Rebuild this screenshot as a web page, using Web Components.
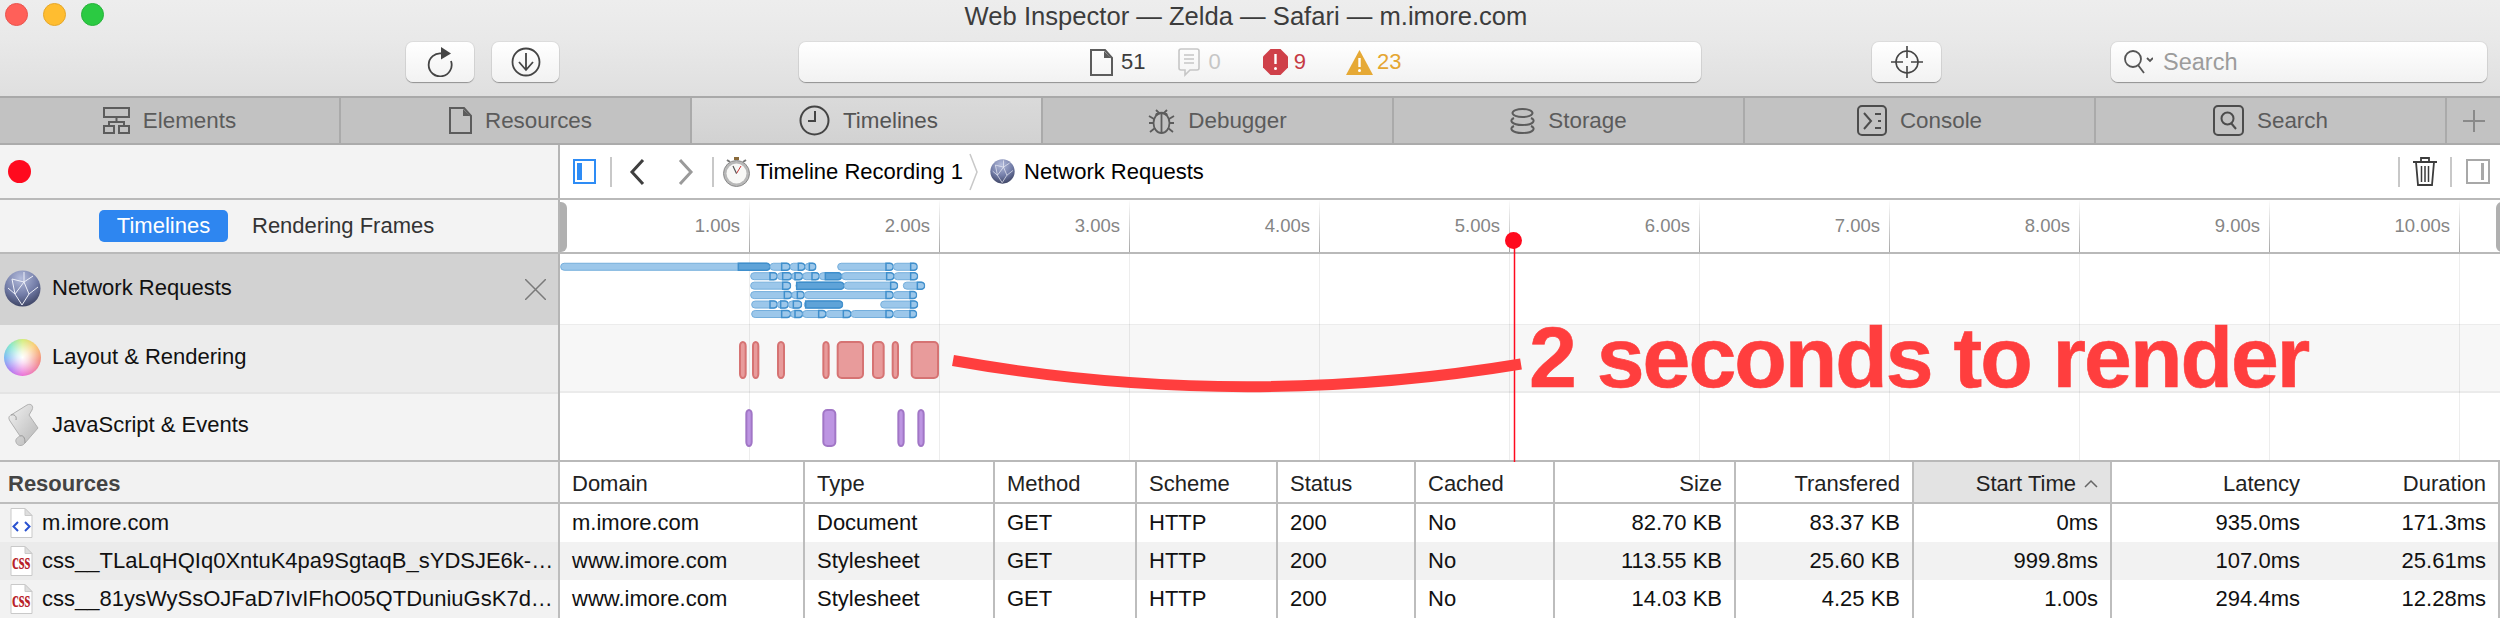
<!DOCTYPE html>
<html>
<head>
<meta charset="utf-8">
<title>Web Inspector</title>
<style>
  html, body { margin: 0; padding: 0; background: #fff; }
  body { width: 2500px; height: 618px; overflow: hidden; font-family: "Liberation Sans", Arial, sans-serif; font-size: 22px; }
</style>
</head>
<body>
<inspector-window>
  <title-bar>Web Inspector — Zelda — Safari — m.imore.com</title-bar>
  <tool-bar></tool-bar>
  <tab-bar>
    <tab-item icon="elements" style="width:341px">Elements</tab-item>
    <tab-item icon="doc" style="padding-left:10px">Resources</tab-item>
    <tab-item icon="clock" active style="padding-left:4px">Timelines</tab-item>
    <tab-item icon="bug">Debugger</tab-item>
    <tab-item icon="db">Storage</tab-item>
    <tab-item icon="console">Console</tab-item>
    <tab-item icon="search">Search</tab-item>
    <tab-plus></tab-plus>
  </tab-bar>
  <nav-row></nav-row>
  <ruler-row></ruler-row>
  <timeline-area></timeline-area>
  <resource-table></resource-table>
  <time-annotation>2 seconds to render</time-annotation>
</inspector-window>

<script>
// shared icons, sized in real pixels
const ICONS = {
  elements: `<svg width="27" height="27" viewBox="0 0 27 27" fill="none" stroke="#5c5c5c" stroke-width="2"><rect x="1" y="1" width="25" height="9"/><path d="M13.500 10v5M6 20v-5h15v5"/><rect x="1" y="19" width="10" height="7"/><rect x="16" y="19" width="10" height="7"/></svg>`,
  doc: `<svg width="23" height="27" viewBox="0 0 23 27" fill="none" stroke="#5c5c5c" stroke-width="2"><path d="M1 1h14l7 8v17H1z"/><path d="M14 2v7h7" fill="#5c5c5c" stroke="none"/></svg>`,
  clock: `<svg width="31" height="31" viewBox="0 0 31 31" fill="none" stroke="#444" stroke-width="2"><circle cx="15.500" cy="15.500" r="14"/><path d="M16 6v10H9"/></svg>`,
  bug: `<svg width="27" height="28" viewBox="0 0 27 28" fill="none" stroke="#5c5c5c" stroke-width="1.800"><ellipse cx="13.500" cy="16" rx="8" ry="10"/><path d="M8 8c1-3 10-3 11 0M13.500 7v19M8 3l3 3M19 3l-3 3M1 9l5 3M26 9l-5 3M1 16h4M26 16h-4M2 25l5-4M25 25l-5-4"/></svg>`,
  db: `<svg width="25" height="26" viewBox="0 0 25 26" fill="none" stroke="#5c5c5c" stroke-width="2"><ellipse cx="12.500" cy="5" rx="10" ry="4"/><path d="M4 10c-5 2-3 7 8.500 7s13.500-5 8.500-7"/><path d="M4 18c-5 2-3 7 8.500 7s13.500-5 8.500-7"/></svg>`,
  console: `<svg width="30" height="31" viewBox="0 0 30 31" fill="none" stroke="#4c4c4c" stroke-width="2"><rect x="1" y="1" width="28" height="29" rx="4"/><path d="M7 8l7 8-7 8M18 9h6M21 16h3M18 23h6"/></svg>`,
  search: `<svg width="31" height="31" viewBox="0 0 31 31" fill="none" stroke="#4c4c4c" stroke-width="2"><rect x="1" y="1" width="29" height="29" rx="4"/><circle cx="14.500" cy="13.500" r="6"/><path d="M18 18l5 6"/></svg>`
};

function globe(size) {
  return `<svg width="${size}" height="${size}" viewBox="0 0 37 37">
    <defs><radialGradient id="gl" cx="45%" cy="22%" r="85%"><stop offset="0" stop-color="#b4bcdc"/><stop offset=".55" stop-color="#717ba6"/><stop offset="1" stop-color="#343a58"/></radialGradient></defs>
    <circle cx="18.500" cy="18.500" r="18" fill="url(#gl)"/>
    <path d="M8 9l12 3 9-6M20 12l-9 12-7-6M20 12l5 12 9-7M11 24l7 11M25 24l-7 11M8 9l3 15M20 2v10" fill="none" stroke="#eef0f8" stroke-width="1"/>
  </svg>`;
}

function fileIcon(kind) {
  const mark = kind == "html"
    ? `<path d="M8 14l-4.500 4.500L8 23M15 14l4.500 4.500L15 23" fill="none" stroke="#2a52d0" stroke-width="2"/>`
    : `<text transform="translate(2 23) scale(1 1.600)" font-family="Liberation Serif, serif" font-weight="700" font-size="15" fill="#b8222a">css</text>`;
  return `<svg width="23" height="30" viewBox="0 0 23 30"><path d="M1 .5h14l7 7v22H1z" fill="#fff" stroke="#c9c9c9"/><path d="M15 .5v7h7z" fill="#dedede" stroke="#c9c9c9"/>${mark}</svg>`;
}

class Base extends HTMLElement {
  connectedCallback() {
    this.attachShadow({mode: "open"}).innerHTML = this.template();
  }
}

class InspectorWindow extends Base {
  template() {
    return `<style>
      :host { display: flex; flex-direction: column; position: relative; width: 2500px; height: 618px; overflow: hidden; }
    </style><slot></slot>`;
  }
}

class TitleBar extends Base {
  template() {
    return `<style>
      :host { display: block; height: 38px; background: linear-gradient(#ededed, #e9e9e9); color: #3c3c3c; font-size: 25.600px; }
      .wrap { display: flex; align-items: center; height: 32px; position: relative; }
      .lights { display: flex; gap: 15px; padding-left: 5px; width: 300px; margin-top: -3px; }
      .lights i { width: 23px; height: 23px; border-radius: 50%; box-sizing: border-box; }
      .title { position: absolute; left: 0; right: 0; text-align: center; transform: translateX(-4px); }
    </style>
    <div class="wrap">
      <div class="lights">
        <i style="background:#ff6059;border:1px solid #e9544e"></i>
        <i style="background:#ffbd30;border:1px solid #e5a72a"></i>
        <i style="background:#2bca42;border:1px solid #27b33a"></i>
      </div>
      <div class="title"><slot></slot></div>
    </div>`;
  }
}

class ToolBar extends Base {
  template() {
    return `<style>
      :host { display: block; height: 58px; padding-top: 4px; box-sizing: border-box; background: linear-gradient(#e9e9e9, #dfdfdf); }
      .b { height: 40px; box-sizing: border-box; border-radius: 7px; background: linear-gradient(#fff, #f2f2f2); box-shadow: 0 1px 1px rgba(0,0,0,.32), 0 0 0 1px rgba(0,0,0,.05); display: flex; align-items: center; justify-content: center; }
      .st { display: flex; align-items: center; font-size: 22px; gap: 8px; }
      .search { justify-content: flex-start; padding-left: 12px; color: #9c9c9c; font-size: 23.500px; gap: 10px; }
    </style>
    <div style="display:flex;padding-left:406px;height:40px">
      <div class="b" style="width:68px"><svg width="26" height="30" viewBox="0 0 26 30" fill="none"><path d="M15 6.500A11.500 11.500 0 1 0 24 14" stroke="#444" stroke-width="1.800"/><path d="M14 0l10 6.500-10 6z" fill="#444"/></svg></div>
      <div class="b" style="width:67px;margin-left:18px"><svg width="30" height="30" viewBox="0 0 30 30" fill="none" stroke="#444" stroke-width="1.800"><circle cx="15" cy="15" r="13.500"/><path d="M15 6v17M8 15l7 8 7-8"/></svg></div>
      <div class="b" style="width:902px;margin-left:240px;justify-content:flex-start;padding-left:291px">
        <div class="st" style="color:#3c3c3c">${ICONS.doc}<span>51</span></div>
        <div class="st" style="color:#c6c6c6;margin-left:33px"><svg width="22" height="29" viewBox="0 0 22 29" fill="none" stroke="#c6c6c6" stroke-width="1.600"><path d="M3 1h16q2 0 2 2v17q0 2-2 2h-7l-5 5v-5H3q-2 0-2-2V3q0-2 2-2z"/><path d="M6 7h10M6 11h10M6 15h10"/></svg><span>0</span></div>
        <div class="st" style="color:#c63b45;margin-left:42px;gap:6px"><svg width="25" height="26" viewBox="0 0 25 26"><path d="M7.500 0h10L25 7.500v11L17.500 26h-10L0 18.500v-11z" fill="#cf4049"/><path d="M12.500 5v10" stroke="#fff" stroke-width="2.400"/><circle cx="12.500" cy="19.500" r="1.500" fill="#fff"/></svg><span>9</span></div>
        <div class="st" style="color:#e5a632;margin-left:40px;gap:4px"><svg width="27" height="25" viewBox="0 0 27 25"><path d="M13.500 0L27 25H0z" fill="#e6a935"/><path d="M13.500 8v9" stroke="#fff" stroke-width="2.400"/><circle cx="13.500" cy="20.500" r="1.500" fill="#fff"/></svg><span>23</span></div>
      </div>
      <div class="b" style="width:69px;margin-left:171px"><svg width="32" height="32" viewBox="0 0 32 32" fill="none" stroke="#444" stroke-width="1.600"><circle cx="16" cy="16" r="11"/><path d="M16 0v12M16 20v12M0 16h12M20 16h12"/></svg></div>
      <div class="b search" style="width:376px;margin-left:170px"><svg width="30" height="26" viewBox="0 0 30 26" fill="none" stroke="#555" stroke-width="1.800"><circle cx="10" cy="10" r="8"/><path d="M15 16l6 8M24 9l3 3 3-3"/></svg><span>Search</span></div>
    </div>`;
  }
}

class TabBar extends Base {
  template() {
    return `<style>
      :host { display: flex; height: 49px; box-sizing: border-box; background: #c2c2c2; border-top: 2px solid #a9a9a9; border-bottom: 2px solid #ababab; }
    </style><slot></slot>`;
  }
}

class TabItem extends Base {
  template() {
    return `<style>
      :host { display: flex; align-items: center; justify-content: center; gap: 13px; width: 351px; height: 100%; box-sizing: border-box; border-right: 2px solid #aaa; color: #5b5b5b; font-size: 22.400px; flex: none; }
      :host([active]) { background: linear-gradient(#dadada, #d2d2d2); color: #545454; }
      svg { display: block; }
    </style>${ICONS[this.getAttribute("icon")]}<slot></slot>`;
  }
}

class TabPlus extends Base {
  template() {
    return `<style>:host { display: flex; flex: 1; align-items: center; justify-content: center; }</style>
    <svg width="22" height="22" viewBox="0 0 22 22" stroke="#8a8a8a" stroke-width="2"><path d="M11 0v22M0 11h22"/></svg>`;
  }
}

class NavRow extends Base {
  template() {
    return `<style>
      :host { display: flex; height: 55px; box-sizing: border-box; border-bottom: 2px solid #b9b9b9; background: #fff; color: #000; font-size: 22px; }
      .left { width: 550px; flex: none; background: #f3f3f3; border-right: 2px solid #b5b5b5; display: flex; align-items: center; padding-left: 8px; }
      .left i { width: 23px; height: 23px; border-radius: 50%; background: #ff0a1e; }
      .right { flex: 1; display: flex; align-items: center; padding-left: 13px; padding-right: 10px; }
      .sep { width: 2px; height: 30px; background: #c8c8c8; flex: none; }
      .grow { flex: 1; }
      svg { display: block; flex: none; }
    </style>
    <div class="left"><i></i></div>
    <div class="right">
      <svg width="23" height="25" viewBox="0 0 23 25" fill="none"><rect x="1" y="1" width="21" height="23" stroke="#2e8cf5" stroke-width="2"/><rect x="4" y="4" width="5" height="17" fill="#2e8cf5"/></svg>
      <div class="sep" style="margin-left:14px"></div>
      <svg style="margin-left:17px" width="16" height="28" viewBox="0 0 16 28" fill="none" stroke="#3f3f3f" stroke-width="3"><path d="M14 2L3 14l11 12"/></svg>
      <svg style="margin-left:33px" width="16" height="28" viewBox="0 0 16 28" fill="none" stroke="#9a9a9a" stroke-width="3"><path d="M2 2l11 12L2 26"/></svg>
      <div class="sep" style="margin-left:18px"></div>
      <svg style="margin-left:9px" width="27" height="30" viewBox="0 0 27 30"><rect x="11" y="0" width="5" height="3" fill="#8a6a3a"/><path d="M4 3l3 2M23 3l-3 2" stroke="#777" stroke-width="2"/><circle cx="13.500" cy="16.500" r="13" fill="#b8b8b8" stroke="#8a8a8a"/><circle cx="13.500" cy="16.500" r="10" fill="#f8f8f6"/><path d="M13.500 16.500L18 9" stroke="#c33" stroke-width="1"/><path d="M13.500 16.500L10 9" stroke="#555" stroke-width="1.200"/></svg>
      <span style="margin-left:6px">Timeline Recording 1</span>
      <svg style="margin-left:6px" width="9" height="38" viewBox="0 0 9 38" fill="none" stroke="#c8c8c8" stroke-width="1.500"><path d="M1 1l7 18-7 18"/></svg>
      <span style="margin-left:12px;display:flex">${globe(25)}</span>
      <span style="margin-left:9px">Network Requests</span>
      <div class="grow"></div>
      <div class="sep"></div>
      <svg style="margin-left:12px" width="26" height="29" viewBox="0 0 26 29" fill="none" stroke="#3c3c3c" stroke-width="1.800"><path d="M1 5h24M9 5V1h8v4M4 5l2 23h14l2-23"/><path d="M9.500 9v16M13 9v16M16.500 9v16" stroke-width="1.500"/></svg>
      <div class="sep" style="margin-left:12px"></div>
      <svg style="margin-left:14px" width="24" height="25" viewBox="0 0 24 25" fill="none"><rect x="1" y="1" width="22" height="23" stroke="#a8a8a8" stroke-width="2"/><rect x="15" y="4" width="3" height="17" fill="#a8a8a8"/></svg>
    </div>`;
  }
}

class RulerRow extends Base {
  template() {
    let ticks = "";
    for (let i = 1; i <= 10; i++) ticks += `<div class="tick"><span>${i}.00s</span></div>`;
    return `<style>
      :host { display: flex; height: 54px; box-sizing: border-box; border-bottom: 2px solid #b9b9b9; background: #fff; position: relative; }
      .seg { width: 459px; padding-left: 99px; flex: none; background: #f3f3f3; border-right: 2px solid #b5b5b5; display: flex; align-items: center; font-size: 22px; color: #333; gap: 24px; }
      .on { background: #2e86f0; color: #fff; width: 129px; height: 32px; border-radius: 5px; display: flex; align-items: center; justify-content: center; margin-top: -1px; }
      .off { margin-top: -1px; }
      .ticks { display: flex; flex: 1; overflow: hidden; }
      .tick { width: 190px; flex: none; box-sizing: border-box; border-right: 1px solid; border-image: linear-gradient(#fff, #a5a5a5) 1; text-align: right; padding-right: 9px; color: #858585; font-size: 18.500px; padding-top: 15px; }
      .grip { position: absolute; width: 7px; height: 50px; top: 2px; background: #b0b0b0; border-radius: 0 6px 6px 0; }
    </style>
    <div class="seg"><div class="on">Timelines</div><div class="off">Rendering Frames</div></div>
    <div class="ticks">${ticks}</div>
    <div class="grip" style="left:560px"></div>
    <div class="grip" style="left:2496px;border-radius:6px 0 0 6px"></div>`;
  }
}

class TimelineLabel extends Base {
  template() {
    return `<style>
      :host { display: flex; align-items: center; height: var(--h); box-sizing: border-box; position: relative; padding-left: 4px; padding-bottom: var(--pb, 3px); gap: 11px; font-size: 22px; color: #111; background: var(--bg); border-bottom: var(--line, none); }
      .ic { width: 37px; height: 44px; display: flex; align-items: center; justify-content: center; flex: none; }
    </style><div class="ic"><slot name="icon"></slot></div><slot></slot>`;
  }
}

class TimelineGraph extends Base {
  template() {
    // spans read off the recording: [start, end, dark part start]
    const rows = [
      [[62,690,595],[690,750,725],[750,795,775],[795,828,808],[893,1060,1038],[1060,1132,1112]],
      [[632,712,690],[712,755,728],[755,788,765],[788,838,816],[838,905,856],[905,1062,1040],[1062,1133,1112]],
      [[632,752,728],[768,912,770],[912,1073,1052],[1090,1154,1132]],
      [[632,755,733],[755,793,772],[793,1060,1038],[1060,1130,1110]],
      [[635,712,690],[712,745,722],[745,785,760],[793,908,797],[1022,1133,1112]],
      [[635,752,725],[752,788,765],[788,858,836],[858,933,910],[933,1060,1038],[1060,1130,1110]]
    ];
    const X = v => v / 3 + 540 - 560;
    let bars = "";
    rows.forEach((row, i) => {
      const y = 9.25 + i * 9.45;
      row.forEach(([a, b, d]) => {
        const x0 = X(a), x1 = X(b), xd = X(d);
        bars += `<rect x="${x0}" y="${y}" width="${x1 - x0}" height="7" rx="3.500" fill="#9cc7ea" stroke="#74aedc"/>`;
        bars += `<path d="M${xd} ${y}H${x1 - 3.5}a3.500 3.500 0 0 1 0 7H${xd}z" fill="${x1 - xd > 10 ? "#5fa3d8" : "#9cc7ea"}" stroke="#3f8fcc" stroke-width="1.500"/>`;
        bars += `<path d="M${x1 + .8} ${y}v7" stroke="#fff" stroke-width=".8"/>`;
      });
    });
    const box = (a, b, y, h, fill, stroke) =>
      `<rect x="${X(a) + 1}" y="${y}" width="${X(b) - X(a) - 2}" height="${h}" rx="4" fill="${fill}" stroke="${stroke}" stroke-width="2"/>`;
    const red = [[597,620],[636,658],[711,735],[847,869],[890,972],[996,1034],[1055,1077],[1112,1197]]
      .map(([a, b]) => box(a, b, 88, 36, "#e89b9b", "#d67373")).join("");
    const purple = [[616,638],[847,889],[1072,1094],[1132,1154]]
      .map(([a, b]) => box(a, b, 156, 36, "#bd95e2", "#a176c6")).join("");
    let grid = "";
    for (let i = 1; i <= 10; i++) grid += `<path d="M${189.5 + (i - 1) * 190} 0v206" stroke="#000" stroke-opacity=".07"/>`;
    return `<style>
      :host { display: block; position: relative; flex: 1; background: #fff; }
      .band { position: absolute; left: 0; right: 0; top: 70px; height: 69px; background: #f7f7f7; box-sizing: border-box; border-top: 1px solid #ececec; border-bottom: 2px solid #ebebeb; }
      svg { position: absolute; left: 0; top: 0; }
    </style>
    <div class="band"></div>
    <svg width="1940" height="206" viewBox="0 0 1940 206">${grid}${bars}${red}${purple}</svg>`;
  }
}

class TimelineArea extends Base {
  template() {
    return `<style>
      :host { display: flex; height: 208px; box-sizing: border-box; border-bottom: 2px solid #b9b9b9; }
      .names { width: 558px; flex: none; border-right: 2px solid #b5b5b5; display: flex; flex-direction: column; }
      .x { position: absolute; left: 525px; top: 25px; }
      .wheel { width: 37px; height: 37px; border-radius: 50%; background: radial-gradient(circle, #fff 0, rgba(255,255,255,.8) 22%, rgba(255,255,255,0) 85%), conic-gradient(#c8e85a, #f8c050 12%, #f07060 28%, #e650d0 50%, #9a5cf0 62%, #5aa8f0 75%, #5fe0c0 87%, #c8e85a); }
    </style>
    <div class="names">
      <timeline-label style="--h:71px;--bg:#d2d2d2">
        <span slot="icon" style="display:flex">${globe(37)}</span>Network Requests
        <svg class="x" width="21" height="21" viewBox="0 0 21 21" stroke="#7a7a7a" stroke-width="1.500"><path d="M0 0l21 21M21 0L0 21"/></svg>
      </timeline-label>
      <timeline-label style="--h:69px;--bg:#ececec;--line:2px solid #e4e4e4">
        <div slot="icon" class="wheel"></div>Layout &amp; Rendering
      </timeline-label>
      <timeline-label style="--h:66px;--bg:#f3f3f3;--pb:5px">
        <svg slot="icon" width="32" height="44" viewBox="0 0 32 44"><defs><linearGradient id="s" x1="0" y1="0" x2="1" y2="1"><stop offset="0" stop-color="#f2f2f2"/><stop offset="1" stop-color="#b5b5b5"/></linearGradient></defs><path d="M4 12L20 2c4-2 7 1 5 5l-3 5 9 13-13 15c-3 4-8 3-9-1-1-3 2-5 4-6L3 18c-2-3-1-5 1-6z" fill="url(#s)" stroke="#b0b0b0"/><path d="M4 12c3-1 6 1 5 5M13 33c3-1 5 1 5 7" fill="none" stroke="#999"/></svg>JavaScript &amp; Events
      </timeline-label>
    </div>
    <timeline-graph></timeline-graph>`;
  }
}

class ResourceTable extends Base {
  template() {
    const head = ["Resources","Domain","Type","Method","Scheme","Status","Cached","Size","Transfered","Start Time","Latency","Duration"];
    const data = [
      ["html","m.imore.com","m.imore.com","Document","GET","HTTP","200","No","82.70 KB","83.37 KB","0ms","935.0ms","171.3ms"],
      ["css","css__TLaLqHQIq0XntuK4pa9SgtaqB_sYDSJE6k-…","www.imore.com","Stylesheet","GET","HTTP","200","No","113.55 KB","25.60 KB","999.8ms","107.0ms","25.61ms"],
      ["css","css__81ysWySsOJFaD7IvIFhO05QTDuniuGsK7d…","www.imore.com","Stylesheet","GET","HTTP","200","No","14.03 KB","4.25 KB","1.00s","294.4ms","12.28ms"]
    ];
    let html = head.map((h, i) => {
      let cls = "h" + (i == 0 ? " first" : "") + (i >= 7 ? " num" : "") + (i == 9 ? " sorted" : "");
      const arrow = i == 9 ? `<svg width="14" height="9" viewBox="0 0 14 9" fill="none" stroke="#666" stroke-width="1.500" style="margin-left:8px"><path d="M1 8l6-6 6 6"/></svg>` : "";
      return `<div class="${cls}">${h}${arrow}</div>`;
    }).join("");
    data.forEach((row, r) => {
      const alt = r == 1 ? " alt" : "";
      row.slice(1).forEach((v, i) => {
        let cls = "c" + alt + (i == 0 ? " first" : "") + (i >= 7 ? " num" : "");
        const icon = i == 0 ? fileIcon(row[0]) : "";
        html += `<div class="${cls}">${icon}<span>${v}</span></div>`;
      });
    });
    return `<style>
      :host { display: grid; height: 156px; grid-template-columns: 560px 245px 190px 142px 141px 138px 139px 181px 178px 198px 197px 1fr; grid-template-rows: 42px 38px 38px 38px; font-size: 22px; color: #111; background: #fff; }
      div { box-sizing: border-box; display: flex; align-items: center; padding: 0 12px; border-right: 2px solid #bdbdbd; white-space: nowrap; overflow: hidden; }
      div:nth-child(12n) { border-right: 0; padding-right: 9px; }
      .h { height: 42px; border-bottom: 2px solid #bdbdbd; color: #222; padding-top: 3px; }
      .h.first { font-weight: 700; color: #444; background: #f2f2f2; padding-left: 8px; }
      .num { justify-content: flex-end; }
      .sorted { background: #e3e3e3; }
      .alt { background: #f2f2f2; }
      .c.first { background: #f2f2f2; padding-left: 10px; gap: 9px; }
      .c.first.alt { background: #ebebeb; }
      svg { flex: none; }
    </style>${html}`;
  }
}

class TimeAnnotation extends Base {
  template() {
    return `<style>
      :host { position: absolute; left: 0; top: 0; width: 2500px; height: 618px; pointer-events: none; }
      svg { position: absolute; left: 0; top: 0; }
      .label { position: absolute; left: 1529px; top: 310px; color: #ff3e3e; font-weight: 700; font-size: 86px; letter-spacing: -2px; line-height: 94px; white-space: nowrap; -webkit-text-stroke: .6px #ff3e3e; }
      .dot { position: absolute; left: 1505px; top: 232px; width: 17px; height: 17px; border-radius: 50%; background: #ff0a1e; }
    </style>
    <svg width="2500" height="618" viewBox="0 0 2500 618">
      <path d="M1514.500 240V462" stroke="#ff0a1e" stroke-width="1.500"/>
      <path d="M953 360.500Q1237 411 1521 364" fill="none" stroke="#ff3e3e" stroke-width="11"/>
    </svg>
    <div class="dot"></div>
    <div class="label"><slot></slot></div>`;
  }
}

customElements.define("inspector-window", InspectorWindow);
customElements.define("title-bar", TitleBar);
customElements.define("tool-bar", ToolBar);
customElements.define("tab-bar", TabBar);
customElements.define("tab-item", TabItem);
customElements.define("tab-plus", TabPlus);
customElements.define("nav-row", NavRow);
customElements.define("ruler-row", RulerRow);
customElements.define("timeline-label", TimelineLabel);
customElements.define("timeline-graph", TimelineGraph);
customElements.define("timeline-area", TimelineArea);
customElements.define("resource-table", ResourceTable);
customElements.define("time-annotation", TimeAnnotation);
</script>
</body>
</html>
